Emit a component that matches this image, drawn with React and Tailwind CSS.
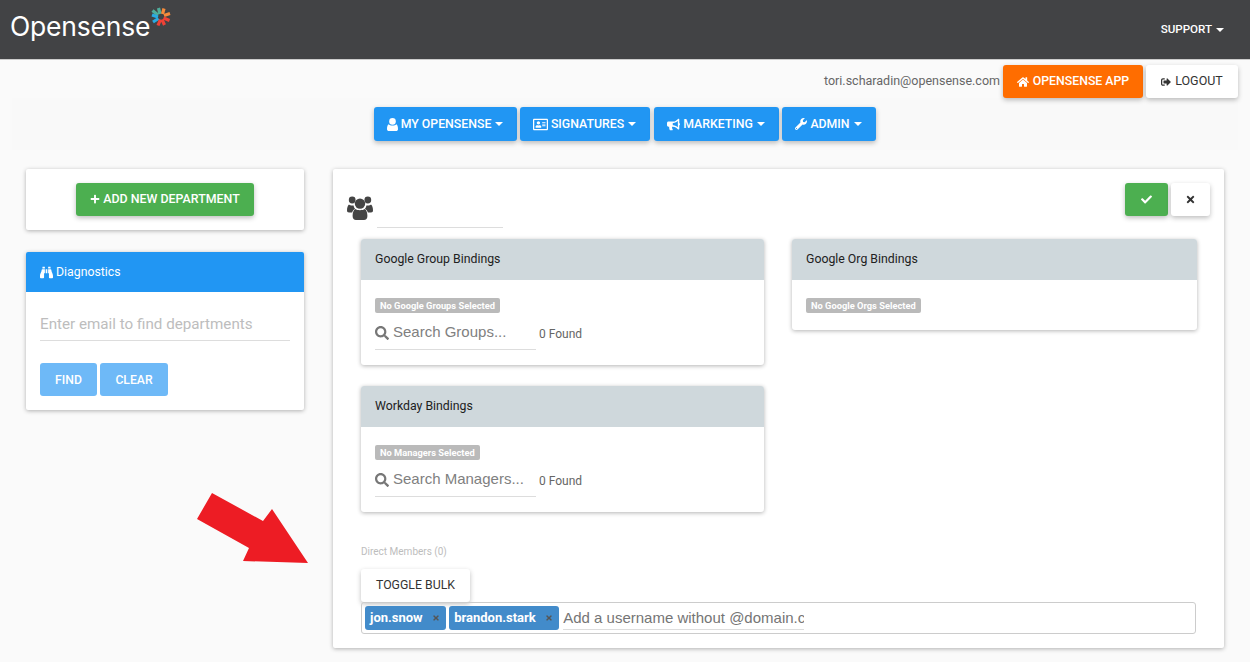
import { FaRegAddressCard, FaBullhorn, FaWrench, FaHome, FaSignOutAlt, FaPlus, FaBinoculars, FaCheck, FaTimes, FaSearch } from 'react-icons/fa'

const btnShadow = 'shadow-[0_2px_5px_rgba(0,0,0,0.26)]'
const cardShadow = 'shadow-[0_1px_4px_rgba(0,0,0,0.3)]'

const Caret = () => (
  <span className="ml-[4px] inline-block border-x-[4px] border-t-[4px] border-x-transparent border-t-white" />
)

const UserIcon = () => (
  <svg width="11" height="13" viewBox="0 0 11 13" fill="currentColor">
    <circle cx="5.5" cy="3.4" r="3.3" />
    <path d="M1.6 6.2 C3 8 8 8 9.4 6.2 C10.6 7 11 9 11 11 C11 12.4 10.2 13 9 13 H2 C0.8 13 0 12.4 0 11 C0 9 0.4 7 1.6 6.2 Z" />
  </svg>
)

const UsersIcon = () => (
  <svg width="26" height="24" viewBox="0 0 26 24" fill="#444444">
    <circle cx="5.2" cy="4" r="3.4" />
    <circle cx="20.8" cy="4" r="3.4" />
    <circle cx="13" cy="7.6" r="5.2" />
    <path d="M2 8.5 C3 9.6 5 9.8 6.6 9.4 C6.8 11 7.4 12 8.2 12.8 C6.6 13.6 5.6 14.8 5.2 16.4 H2 C0.6 16.4 0 15.6 0 14.4 C0 12 0.6 9.6 2 8.5 Z" />
    <path d="M24 8.5 C23 9.6 21 9.8 19.4 9.4 C19.2 11 18.6 12 17.8 12.8 C19.4 13.6 20.4 14.8 20.8 16.4 H24 C25.4 16.4 26 15.6 26 14.4 C26 12 25.4 9.6 24 8.5 Z" />
    <path d="M8.4 13 C10 14.6 16 14.6 17.6 13 C19.6 14 20.4 16.8 20.4 20 C20.4 22.6 19 24 17 24 H9 C7 24 5.6 22.6 5.6 20 C5.6 16.8 6.4 14 8.4 13 Z" />
  </svg>
)

const NavButton = ({ icon, label, width, extra = '' }) => (
  <button className={`flex h-[34px] items-center justify-center rounded-[3px] bg-[#2196f3] text-[12.3px] font-medium text-white ${btnShadow} ${width} ${extra}`}>
    {icon}
    <span className="ml-[3px]">{label}</span>
    <Caret />
  </button>
)

const Logo = () => (
  <div className="flex items-start">
    <span className="mt-[10px] font-['Inter'] text-[26.5px] font-normal leading-[32px] tracking-[-0.2px] text-white">Opensense</span>
    <svg width="20" height="20" viewBox="0 0 20 20" className="ml-[1px] mt-[7px]" fill="none" strokeWidth="3.2">
      <path d="M7.5 1 L9 7 M1.5 3.5 L7 8" stroke="#4fae9c" />
      <path d="M13 1.5 L11.5 7 M19 6.5 L13 8.5" stroke="#f58b3c" />
      <path d="M1 8 L7 10 M2 15 L7.5 11.5" stroke="#29abe2" />
      <path d="M7 18.5 L9.5 12.5 M13.5 18 L11 12.5 M18.5 13.5 L12.5 11" stroke="#ef4136" />
    </svg>
  </div>
)

const BindingCard = ({ title, badge, placeholder }) => (
  <div className={`overflow-hidden rounded-[3px] bg-white ${cardShadow}`}>
    <div className="flex h-[41px] items-center bg-[#cfd8dc] px-[14px] pb-[1px] text-[12.3px] text-[#212121]">{title}</div>
    <div className="px-[14px] pt-[18px]">
      <span className="block h-[15px] w-fit rounded-[2px] bg-[#bababa] px-[5px] text-[9.3px] font-bold leading-[15px] text-white">{badge}</span>
      {placeholder ? (
        <div className="flex items-start pb-[15px]">
          <div className="flex h-[37px] w-[161px] items-center border-b border-[#dddddd] pt-[3px] font-['Liberation_Sans'] text-[15px] text-[#808080]">
            <FaSearch className="mr-[4px] text-[14px] text-[#777777]" />
            {placeholder}
          </div>
          <span className="ml-[3px] mt-[12px] text-[12px] text-[#666666]">0 Found</span>
        </div>
      ) : (
        <div className="h-[17px]" />
      )}
    </div>
  </div>
)

const Tag = ({ name }) => (
  <span className="flex h-[24px] items-center rounded-[3px] bg-[#428bca] pl-[5px] pr-[6.5px] text-[13px] font-bold text-white">
    {name}
    <FaTimes className="ml-[9px] text-[8px] text-[#555555]" />
  </span>
)

const App = () => {
  return (
    <div className="relative h-[662px] overflow-hidden bg-[#fafafa] font-['Roboto',sans-serif]">
      {/* Top bar */}
      <div className="flex h-[60px] justify-between border-b border-[#cccccc] bg-[#424345] pl-[10px] pr-[26px]">
        <Logo />
        <div className="mt-[23px] flex h-[14px] items-center text-[11.6px] font-medium text-white">
          SUPPORT
          <Caret />
        </div>
      </div>

      {/* User row */}
      <div className="mt-[5px] flex h-[33px] items-center justify-end pr-[12px]">
        <span className="mr-[3px] text-[12.5px] text-[#666666]">tori.scharadin@opensense.com</span>
        <button className={`flex h-[33px] w-[140px] items-center justify-center rounded-[3px] bg-[#ff6d00] text-[12.3px] font-medium text-white ${btnShadow}`}>
          <FaHome className="mr-[4px] text-[12px]" />
          OPENSENSE APP
        </button>
        <button className={`ml-[3px] flex h-[33px] w-[92px] items-center justify-center rounded-[3px] bg-white text-[12.5px] text-[#333333] ${btnShadow}`}>
          <FaSignOutAlt className="mr-[4px] text-[10px]" />
          LOGOUT
        </button>
      </div>

      {/* Nav */}
      <div className="mx-[12px] flex h-[52px] items-center justify-center gap-[3px] bg-[#f9f9f9] pr-[1px]">
        <NavButton icon={<UserIcon />} label="MY OPENSENSE" width="w-[143px]" />
        <NavButton icon={<FaRegAddressCard className="text-[15px]" />} label="SIGNATURES" width="w-[130px]" />
        <NavButton icon={<FaBullhorn className="text-[13px]" />} label="MARKETING" width="w-[125px]" extra="ml-[1px]" />
        <NavButton icon={<FaWrench className="text-[12px]" />} label="ADMIN" width="w-[94px]" />
      </div>

      <div className="mt-[19px] flex items-start gap-[29px] pl-[26px]">
        {/* Left column */}
        <div className="flex w-[278px] flex-col gap-[22px]">
          <div className={`flex h-[61px] items-start justify-center rounded-[2px] bg-white pt-[14px] ${cardShadow}`}>
            <button className={`flex h-[33px] w-[178px] items-center justify-center rounded-[3px] bg-[#4caf50] pb-[1px] text-[12.4px] font-medium text-white ${btnShadow}`}>
              <FaPlus className="mr-[3px] text-[10px]" />
              ADD NEW DEPARTMENT
            </button>
          </div>
          <div className={`overflow-hidden rounded-[2px] bg-white ${cardShadow}`}>
            <div className="flex h-[40px] items-center bg-[#2196f3] px-[14px] text-[12.3px] text-white">
              <FaBinoculars className="mr-[3px] text-[13px]" />
              Diagnostics
            </div>
            <div className="px-[14px] pb-[14px] pt-[17px]">
              <div className="h-[32px] border-b border-[#dddddd] text-[15.2px] leading-[30px] text-[#bdbdbd]">Enter email to find departments</div>
              <div className="mt-[22px] flex gap-[3px]">
                <button className="h-[33px] w-[57px] rounded-[3px] bg-[#6eb9f7] pt-[1px] text-[12.2px] font-medium text-white">FIND</button>
                <button className="h-[33px] w-[68px] rounded-[3px] bg-[#6eb9f7] pt-[1px] text-[12.2px] font-medium text-white">CLEAR</button>
              </div>
            </div>
          </div>
        </div>

        {/* Main card */}
        <div className={`h-[479px] w-[891px] rounded-[2px] bg-white ${cardShadow}`}>
          <div className="flex h-[70px] justify-between pr-[14px]">
            <div className="flex items-start pl-[14px]">
              <div className="mt-[27px]">
                <UsersIcon />
              </div>
              <div className="ml-[4px] mt-[26px] h-[33px] w-[126px] border-b border-[#dddddd]" />
            </div>
            <div className="flex items-start gap-[3px] pt-[14px]">
              <button className={`flex h-[33px] w-[43px] items-center justify-center rounded-[3px] bg-[#4caf50] pb-[1px] text-white ${btnShadow}`}>
                <FaCheck className="text-[11px]" />
              </button>
              <button className={`flex h-[33px] w-[39px] items-center justify-center rounded-[3px] bg-white pb-[1px] text-[#333333] ${btnShadow}`}>
                <FaTimes className="text-[11px]" />
              </button>
            </div>
          </div>

          <div className="grid grid-cols-[403px_405px] items-start gap-x-[28px] pl-[28px]">
            <div className="flex flex-col gap-[21px]">
              <BindingCard title="Google Group Bindings" badge="No Google Groups Selected" placeholder="Search Groups..." />
              <BindingCard title="Workday Bindings" badge="No Managers Selected" placeholder="Search Managers..." />
            </div>
            <BindingCard title="Google Org Bindings" badge="No Google Orgs Selected" />
          </div>

          <div className="px-[28px] pt-[34px]">
            <div className="text-[10px] leading-[12px] text-[#bdbdbd]">Direct Members (0)</div>
            <button className={`mt-[11px] block h-[33px] w-[109px] rounded-[3px] bg-white text-[12.3px] text-[#333333] ${btnShadow}`}>TOGGLE BULK</button>
            <div className="flex h-[32px] items-center gap-[3px] rounded-[3px] border border-[#cccccc] pl-[3px]">
              <Tag name="jon.snow" />
              <Tag name="brandon.stark" />
              <span className="ml-[1px] h-[24px] w-[241px] overflow-hidden whitespace-nowrap border-b border-[#dddddd] font-['Liberation_Sans'] text-[15px] leading-[23px] text-[#757575]">Add a username without @domain.com</span>
            </div>
          </div>
        </div>
      </div>

      {/* Red arrow, sits over the page */}
      <svg className="absolute left-[190px] top-[485px]" width="125" height="85" viewBox="190 485 125 85">
        <polygon points="212,493 263,521 272,509 308,563 243,561 249,548 197,519" fill="#ed1c24" />
      </svg>
    </div>
  )
}

export default App
